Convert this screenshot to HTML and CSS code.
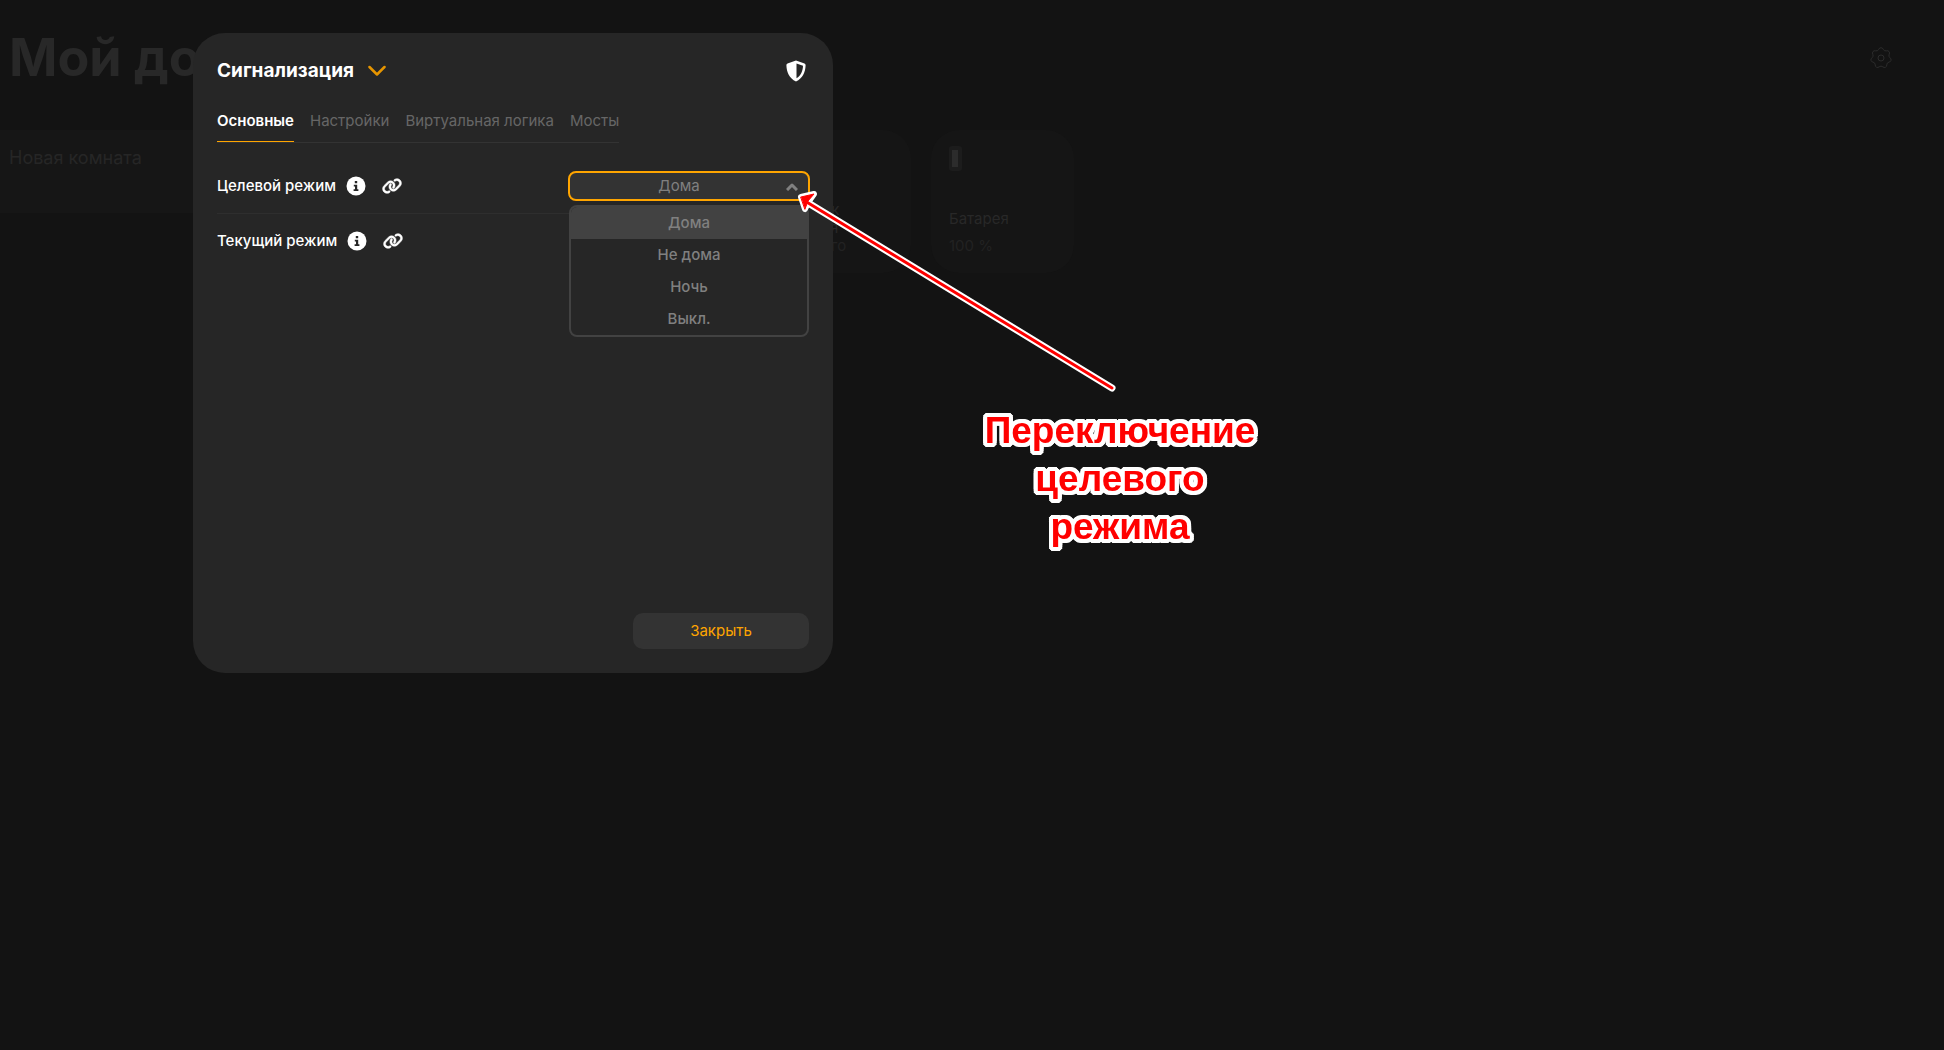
FILE: index.html
```html
<!DOCTYPE html>
<html lang="ru">
<head>
    <meta charset="UTF-8">
    <meta name="viewport" content="width=device-width, initial-scale=1.0">
    <title>Мой дом</title>
    <link rel="stylesheet" href="styles.css">
</head>
<body>

    <div class="page">
        <header class="page-header">
            <h1>Мой дом</h1>
            <button class="settings" aria-label="Настройки дома">
                <svg width="22" height="22" viewBox="0 0 22 22" fill="none" stroke="currentColor">
                    <path d="M8.820 2.270A2.300 2.300 0 0 1 13.180 2.270A3 3 0 0 0 16.470 3.850A2.300 2.300 0 0 1 19.180 7.260A3 3 0 0 0 20 10.820A2.300 2.300 0 0 1 19.030 15.070A3 3 0 0 0 16.750 17.920A2.300 2.300 0 0 1 12.830 19.810A3 3 0 0 0 9.170 19.810A2.300 2.300 0 0 1 5.250 17.920A3 3 0 0 0 2.970 15.070A2.300 2.300 0 0 1 2 10.820A3 3 0 0 0 2.820 7.260A2.300 2.300 0 0 1 5.530 3.850A3 3 0 0 0 8.820 2.270Z"/>
                    <circle cx="11" cy="11" r="3"/>
                </svg>
            </button>
        </header>
        <main class="room">
            <h2>Новая комната</h2>
            <div class="cards">
                <div class="card">
                    <p class="card-name">Датчик<br>уровня</p>
                    <p class="card-value">Другого</p>
                </div>
                <div class="card">
                    <svg class="battery" width="13" height="25" viewBox="0 0 13 25">
                        <rect width="13" height="25" rx="3" fill="#1c1c1c"/>
                        <rect x="3" y="4" width="6" height="17" fill="#2c2c2c"/>
                    </svg>
                    <p class="card-name">Батарея</p>
                    <p class="card-value">100 %</p>
                </div>
            </div>
        </main>
    </div>

    <div class="overlay">
        <section class="modal" role="dialog" aria-labelledby="modal-title">
            <header class="modal-header">
                <h2 id="modal-title">Сигнализация</h2>
                <button class="expand" aria-label="Развернуть">
                    <svg width="18" height="12" viewBox="0 0 18 12" fill="none" stroke="currentColor" stroke-width="2.500" stroke-linecap="round" stroke-linejoin="round">
                        <path d="M1.500 2L9 9.500L16.500 2"/>
                    </svg>
                </button>
                <svg class="shield" width="20" height="22" viewBox="0 0 20 22">
                    <path fill="#fff" fill-rule="evenodd" d="M10 0.500L18.500 3.500Q19.700 4 19.600 5.300C19.400 12 16.800 18.500 10 21.500C3.200 18.500 0.600 12 0.400 5.300Q0.300 4 1.500 3.500ZM10.500 3.500V18.300C15 15.800 16.800 11 17 5.800Z"/>
                </svg>
            </header>

            <nav class="tabs">
                <a href="#main" class="active">Основные</a>
                <a href="#settings">Настройки</a>
                <a href="#logic">Виртуальная логика</a>
                <a href="#bridges">Мосты</a>
            </nav>

            <div class="rows">
                <div class="row">
                    <label for="target-mode">Целевой режим</label>
                    <div class="icons">
                        <button aria-label="Информация">
                            <svg width="20" height="20" viewBox="0 0 20 20">
                                <circle cx="10" cy="10" r="9.500" fill="#fff"/>
                                <path fill="#262626" d="M8.800 5h2.400v2.300H8.800zM7.800 8.700h3.400v4.600h1.200V15H7.600v-1.700h1.400v-2.900H7.800z"/>
                            </svg>
                        </button>
                        <button aria-label="Связь">
                            <svg width="20" height="16" viewBox="0 0 640 512">
                                <path fill="#fff" stroke="#fff" stroke-width="16" d="M579.800 267.700c56.500-56.500 56.500-148 0-204.500-50-50-128.800-56.500-186.300-15.400l-1.600 1.100c-14.400 10.300-17.700 30.300-7.400 44.600s30.300 17.700 44.600 7.400l1.600-1.100c32.100-22.900 76-19.300 103.800 8.600 31.500 31.500 31.500 82.500 0 114L422.300 334.800c-31.500 31.500-82.500 31.500-114 0-27.900-27.900-31.500-71.800-8.600-103.800l1.100-1.600c10.300-14.400 6.900-34.400-7.400-44.600s-34.400-6.900-44.600 7.400l-1.100 1.600C206.500 251.200 213 330 263 380c56.500 56.500 148 56.500 204.500 0zM60.200 244.300c-56.500 56.500-56.500 148 0 204.500 50 50 128.800 56.500 186.300 15.400l1.600-1.100c14.400-10.300 17.700-30.300 7.400-44.600s-30.300-17.700-44.600-7.400l-1.600 1.100c-32.100 22.900-76 19.300-103.800-8.600C74 372 74 321 105.500 289.500L217.700 177.200c31.500-31.500 82.500-31.500 114 0 27.900 27.900 31.500 71.800 8.600 103.900l-1.100 1.600c-10.300 14.400-6.900 34.400 7.400 44.600s34.400 6.900 44.600-7.400l1.100-1.600C433.500 260.800 427 182 377 132c-56.500-56.500-148-56.500-204.500 0z"/>
                            </svg>
                        </button>
                    </div>
                    <div class="select">
                        <select id="target-mode">
                            <option selected>Дома</option>
                            <option>Не дома</option>
                            <option>Ночь</option>
                            <option>Выкл.</option>
                        </select>
                        <svg class="arrow" width="12" height="8" viewBox="0 0 12 8" fill="none" stroke="currentColor" stroke-width="3" stroke-linejoin="round">
                            <path d="M1 7L6 2L11 7"/>
                        </svg>
                        <ul class="options">
                            <li class="current">Дома</li>
                            <li>Не дома</li>
                            <li>Ночь</li>
                            <li>Выкл.</li>
                        </ul>
                    </div>
                </div>
                <div class="row">
                    <span>Текущий режим</span>
                    <div class="icons">
                        <button aria-label="Информация">
                            <svg width="20" height="20" viewBox="0 0 20 20">
                                <circle cx="10" cy="10" r="9.500" fill="#fff"/>
                                <path fill="#262626" d="M8.800 5h2.400v2.300H8.800zM7.800 8.700h3.400v4.600h1.200V15H7.600v-1.700h1.400v-2.900H7.800z"/>
                            </svg>
                        </button>
                        <button aria-label="Связь">
                            <svg width="20" height="16" viewBox="0 0 640 512">
                                <path fill="#fff" stroke="#fff" stroke-width="16" d="M579.800 267.700c56.500-56.500 56.500-148 0-204.500-50-50-128.800-56.500-186.300-15.400l-1.600 1.100c-14.400 10.300-17.700 30.300-7.400 44.600s30.300 17.700 44.600 7.400l1.600-1.100c32.100-22.900 76-19.300 103.800 8.600 31.500 31.500 31.500 82.500 0 114L422.300 334.800c-31.500 31.500-82.500 31.500-114 0-27.900-27.900-31.500-71.800-8.600-103.800l1.100-1.600c10.300-14.400 6.900-34.400-7.400-44.600s-34.400-6.900-44.600 7.400l-1.100 1.600C206.500 251.200 213 330 263 380c56.500 56.500 148 56.500 204.500 0zM60.200 244.300c-56.500 56.500-56.500 148 0 204.500 50 50 128.800 56.500 186.300 15.400l1.600-1.100c14.400-10.300 17.700-30.300 7.400-44.600s-30.300-17.700-44.600-7.400l-1.600 1.100c-32.100 22.900-76 19.300-103.800-8.600C74 372 74 321 105.500 289.500L217.700 177.200c31.500-31.500 82.500-31.500 114 0 27.900 27.900 31.500 71.800 8.600 103.900l-1.100 1.600c-10.300 14.400-6.900 34.400 7.400 44.600s34.400 6.900 44.600-7.400l1.100-1.600C433.500 260.800 427 182 377 132c-56.500-56.500-148-56.500-204.500 0z"/>
                            </svg>
                        </button>
                    </div>
                </div>
            </div>

            <footer class="modal-footer">
                <button class="close">Закрыть</button>
            </footer>
        </section>
    </div>

    <!-- arrow and hint -->
    <svg class="pointer" width="330" height="210" viewBox="0 0 330 210" stroke-linecap="round" stroke-linejoin="round">
        <path stroke="#fff" stroke-width="7" d="M12 12L319 199"/>
        <path stroke="#fff" stroke-width="6" fill="#fff" d="M8 8L21 5L16 12L12 20Z"/>
        <path stroke="#f00" stroke-width="3" d="M12 12L319 199"/>
        <path stroke="#f00" fill="#f00" d="M8 8L21 5L15 12L12 20Z"/>
    </svg>
    <p class="hint">Переключение<br>целевого<br>режима</p>

</body>
</html>
```

FILE: styles.css
```css
* {
    box-sizing: border-box;
}

body {
    margin: 0;
    min-height: 100vh;
    background: #131313;
    color: #fff;
    font-family: Inter, "Noto Sans", sans-serif;
    font-size: 15px;
    line-height: 20px;
}

h1, h2, p, ul {
    margin: 0;
    padding: 0;
}

button {
    padding: 0;
    border: 0;
    background: none;
    color: inherit;
    font: inherit;
    cursor: pointer;
}

svg {
    display: block;
}

/* page behind the dialog */
.page-header {
    display: flex;
    align-items: center;
    justify-content: space-between;
    height: 130px;
    padding: 0 52px 14px 9px;
    color: #282828;
}

.page-header h1 {
    font-size: 52px;
    line-height: 64px;
    font-weight: 700;
}

.settings {
    color: #2c2c2c;
}

.room {
    display: flex;
}

.room h2 {
    width: 768px;
    height: 83px;
    padding: 16px 9px;
    background: #161616;
    color: #262626;
    font-size: 18px;
    line-height: 24px;
    font-weight: 400;
}

.cards {
    display: flex;
    gap: 20px;
}

.card {
    display: flex;
    flex-direction: column;
    width: 143px;
    height: 143px;
    padding: 16px 18px 18px;
    border-radius: 28px;
    background: #151515;
    color: #282828;
    line-height: 18px;
}

.card-name {
    display: flex;
    align-items: center;
    height: 36px;
    margin-top: auto;
}

.card-value {
    color: #222;
}

/* dialog */
.overlay {
    position: fixed;
    inset: 0;
    padding: 33px 193px;
}

.modal {
    display: flex;
    flex-direction: column;
    max-width: 640px;
    min-height: 640px;
    padding: 24px;
    border-radius: 32px;
    background: #262626;
}

.modal-header {
    display: flex;
    align-items: center;
    gap: 14px;
    height: 28px;
}

.modal-header h2 {
    font-size: 19px;
    line-height: 28px;
    font-weight: 700;
}

.expand {
    color: #e69500;
}

.shield {
    margin-left: auto;
    margin-right: 3px;
}

.tabs {
    display: flex;
    align-self: flex-start;
    gap: 16px;
    margin-top: 26px;
    border-bottom: 1px solid #333;
}

.tabs a {
    padding-bottom: 10px;
    color: #666;
    text-decoration: none;
}

.tabs .active {
    border-bottom: 1px solid #ffa500;
    color: #fff;
    font-weight: 600;
}

.rows {
    margin-top: 16px;
}

.row {
    display: flex;
    align-items: center;
    gap: 10px;
    height: 54px;
}

.row + .row {
    border-top: 1px solid #2e2e2e;
}

.row label,
.row span {
    font-weight: 500;
}

.icons {
    display: flex;
    align-items: center;
    gap: 16px;
}

.select {
    position: relative;
    width: 242px;
    margin-left: auto;
    margin-right: -1px;
    color: #808080;
}

.select select {
    display: block;
    width: 100%;
    height: 30px;
    padding: 0 26px 0 6px;
    border: 2px solid #ffa500;
    border-radius: 8px;
    outline: 0;
    background: #333;
    color: inherit;
    font: inherit;
    text-align: center;
    text-align-last: center;
    appearance: none;
}

.arrow {
    position: absolute;
    top: 12px;
    right: 12px;
}

.options {
    position: absolute;
    top: 34px;
    left: 1px;
    right: 1px;
    overflow: hidden;
    border: 2px solid #424242;
    border-radius: 8px;
    background: #262626;
    font-weight: 500;
    line-height: 32px;
    text-align: center;
    list-style: none;
}

.options .current {
    background: #424242;
}

.modal-footer {
    display: flex;
    justify-content: flex-end;
    margin-top: auto;
}

.close {
    width: 176px;
    height: 36px;
    border-radius: 10px;
    background: #333;
    color: #ffa500;
}

/* annotation */
.pointer {
    position: absolute;
    top: 189px;
    left: 793px;
}

.hint {
    position: absolute;
    top: 407px;
    left: 970px;
    width: 300px;
    color: #f00;
    font-family: "Liberation Sans", Arial, sans-serif;
    font-size: 37px;
    line-height: 48px;
    font-weight: 700;
    text-align: center;
    text-shadow:
        4px 0 #fff, -4px 0 #fff, 0 4px #fff, 0 -4px #fff,
        3px 3px #fff, -3px 3px #fff, 3px -3px #fff, -3px -3px #fff,
        4px 2px #fff, -4px 2px #fff, 4px -2px #fff, -4px -2px #fff,
        2px 4px #fff, -2px 4px #fff, 2px -4px #fff, -2px -4px #fff,
        2px 0 #fff, -2px 0 #fff, 0 2px #fff, 0 -2px #fff;
}
```
